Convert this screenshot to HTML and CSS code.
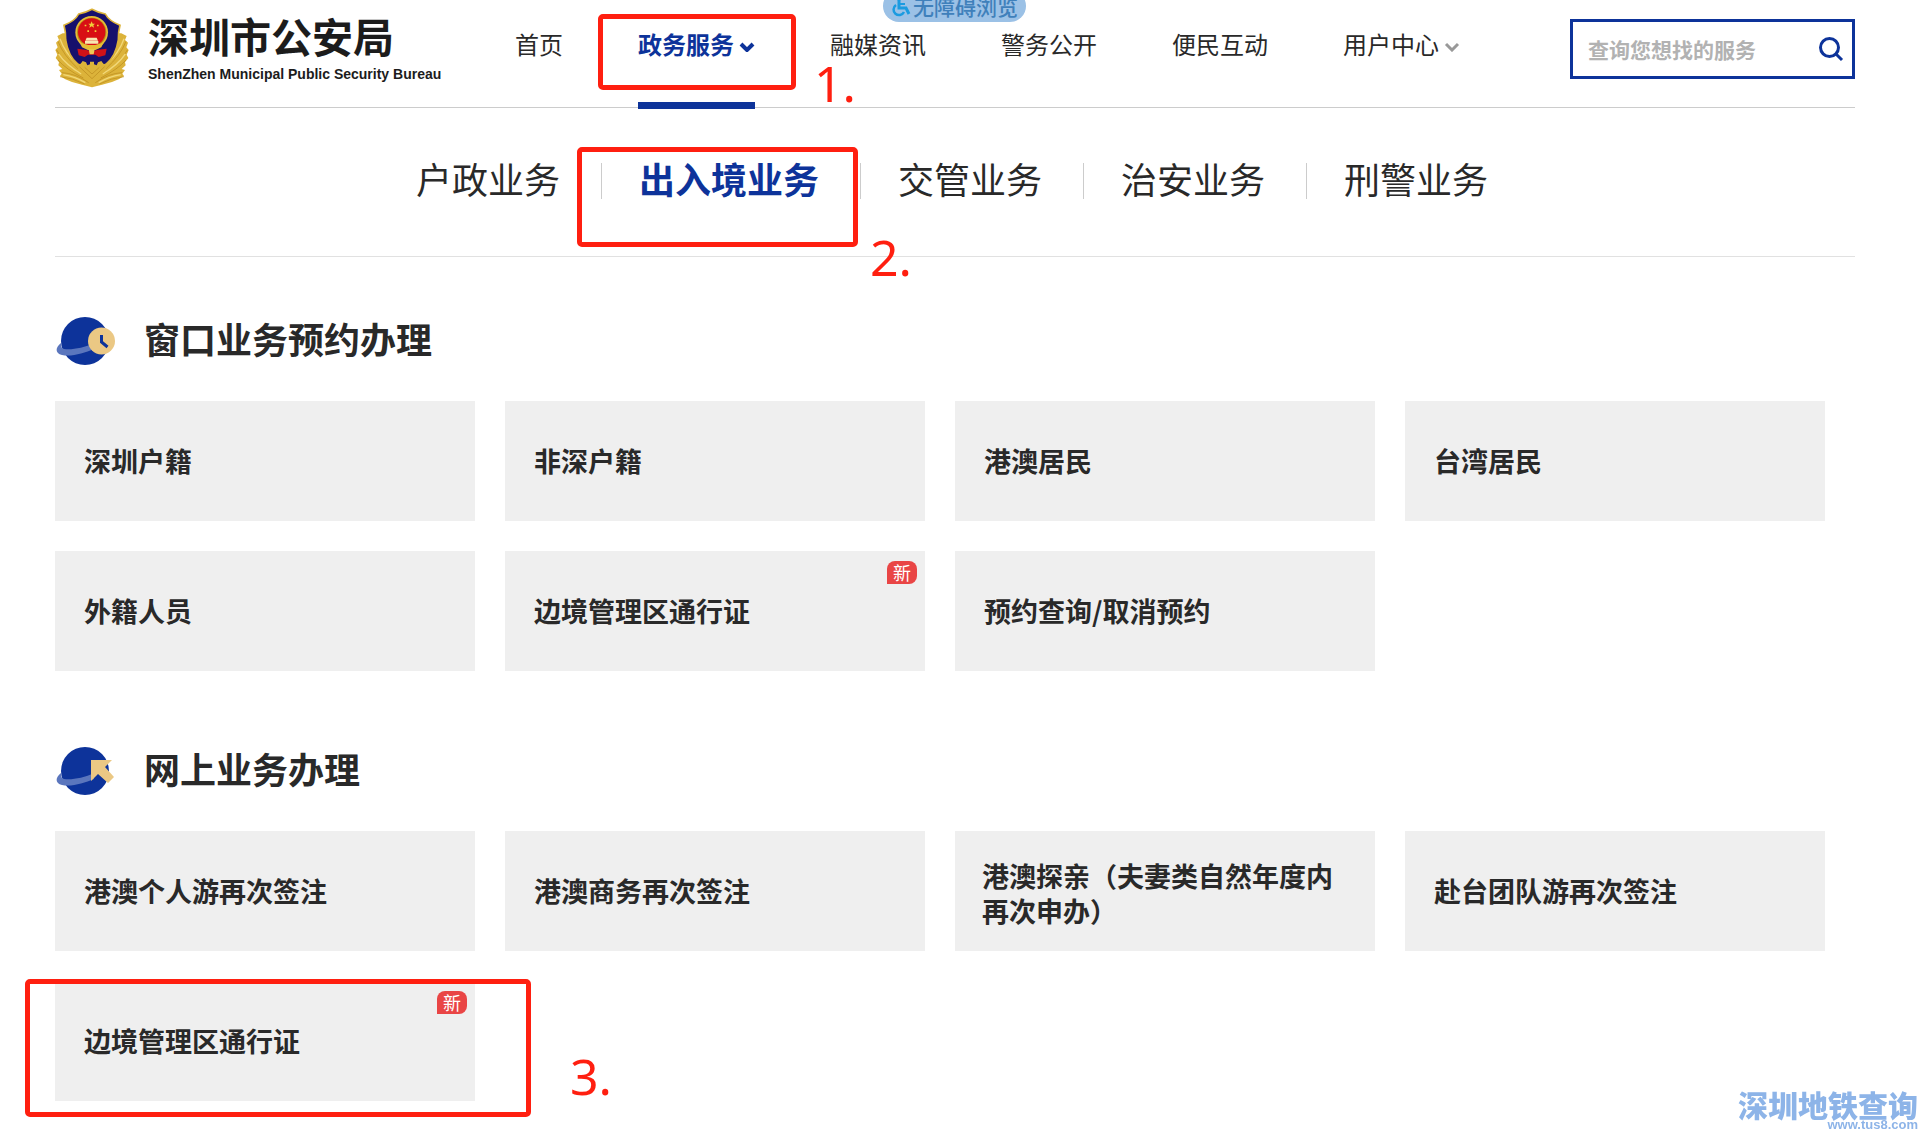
FILE: index.html
```
<!DOCTYPE html>
<html lang="zh-CN">
<head>
  <meta charset="UTF-8">
  <title>深圳市公安局</title>
  <link rel="stylesheet" href="styles.css">
</head>
<body>
  <a href="#" class="barrier-free">
    <svg width="20" height="22" viewBox="0 0 20 22" fill="none" stroke="#1b9be0" stroke-width="3">
      <circle cx="8" cy="3" r="2.5" fill="#1b9be0" stroke="none"/>
      <path d="M8 5v8h7l3 6"/>
      <path d="M8 9h6" stroke-width="2"/>
      <path d="M5 10a5.500 5.500 0 1 0 8 7" stroke-width="2.500"/>
    </svg>
    <span>无障碍浏览</span>
  </a>

  <div class="wrap">
    <!-- 头部 -->
    <header class="header">
      <a href="#" class="logo">
        <svg class="emblem" width="74" height="81" viewBox="15 12 222 243">
          <!-- 松枝 -->
          <path fill="#dcb33a" d="M38 88L22 96l5 12-9 8 5 14-7 8 6 14-5 10 10 13-2 9 12 11-10 3 8 11-5 7 16 10 20 8 30 8 30 8 30-8 30-8 20-8 16-10-5-7 8-11-10-3 12-11-2-9 10-13-5-10 6-14-7-8 5-14-9-8 5-12-16-8z"/>
          <g fill="none" stroke="#b98a1d" stroke-width="2">
            <path d="M24 112q16 42 60 82M20 138q20 36 66 68M24 168q24 28 76 54M30 218q38 4 74 22M36 206q40 2 80 30"/>
            <path d="M228 112q-16 42-60 82M232 138q-20 36-66 68M228 168q-24 28-76 54M222 218q-38 4-74 22M216 206q-40 2-80 30"/>
          </g>
          <g fill="none" stroke="#f2d878" stroke-width="4">
            <path d="M30 104q14 42 54 78M26 150q22 32 68 60M40 212q36 6 66 24"/>
            <path d="M222 104q-14 42-54 78M226 150q-22 32-68 60M212 212q-36 6-66 24"/>
          </g>
          <!-- 盾牌 -->
          <path fill="#16106c" stroke="#dcb33a" stroke-width="5" d="M126 16q18 10 40 14 10 20 44 34-6 22-5 44-8 50-36 72-18 14-43 20-25-6-43-20-28-22-36-72 1-22-5-44 34-14 44-34 22-4 40-14z"/>
          <!-- 国徽 -->
          <circle cx="125" cy="85" r="49" fill="#e6bd35"/>
          <circle cx="125" cy="85" r="44" fill="#b98a1d"/>
          <circle cx="125" cy="84" r="41" fill="#d80f14"/>
          <path fill="#f0ce3a" d="M125 52l3 7h7l-5 5 2 7-7-4-7 4 2-7-5-5h7z"/>
          <path fill="#f0ce3a" d="M104 62h5v5h-5zM141 62h5v5h-5zM112 79h5v5h-5zM134 79h5v5h-5z"/>
          <path fill="#f7e7b0" d="M110 101h30l4 9h-38zM105 111h40v8h-40z"/>
          <path fill="#e6bd35" d="M88 113q16 10 37 10t37-10l-8 17q-14 9-29 9t-29-9z"/>
          <path fill="#cf1218" d="M82 134l24 3 19 5 19-5 26-3-4 20-20 5-10-7h-22l-10 7-18-5z"/>
          <path fill="#ecc956" d="M116 136h18l-3 15h-12z"/>
          <!-- 城墙 -->
          <path fill="#dcb33a" d="M76 182l16-3 6-8 10 4 4 9 8-3v-8h12v8l8 3 4-9 10-4 6 8 16 3-18 26-32 30-32-30z"/>
          <path fill="none" stroke="#b98a1d" stroke-width="2" d="M88 188l38 36 38-36M104 190l22 20 22-20"/>
        </svg>
        <span class="logo-text">
          <strong>深圳市公安局</strong>
          <em>ShenZhen Municipal Public Security Bureau</em>
        </span>
      </a>

      <ul class="nav">
        <li><a href="#">首页</a></li>
        <li class="active">
          <a href="#">政务服务<svg width="16" height="10" viewBox="0 0 16 10"><path d="M2 2l6 6 6-6"/></svg></a>
          <span class="mark mark-nav"></span>
          <b class="step step-nav">1.</b>
        </li>
        <li><a href="#">融媒资讯</a></li>
        <li><a href="#">警务公开</a></li>
        <li><a href="#">便民互动</a></li>
        <li><a href="#">用户中心<svg width="16" height="10" viewBox="0 0 16 10"><path d="M2 2l6 6 6-6"/></svg></a></li>
      </ul>

      <form class="search">
        <input type="text" placeholder="查询您想找的服务" aria-label="查询您想找的服务">
        <button type="button" aria-label="搜索">
          <svg width="26" height="26" viewBox="0 0 26 26" fill="none" stroke="#0d339a" stroke-width="3">
            <circle cx="11.500" cy="11.500" r="9"/>
            <path d="M18 18l6 6"/>
          </svg>
        </button>
      </form>
    </header>

    <!-- 二级导航 -->
    <ul class="subnav">
      <li><a href="#">户政业务</a></li>
      <li class="active">
        <a href="#">出入境业务</a>
        <span class="mark mark-sub"></span>
        <b class="step step-sub">2.</b>
      </li>
      <li><a href="#">交管业务</a></li>
      <li><a href="#">治安业务</a></li>
      <li><a href="#">刑警业务</a></li>
    </ul>

    <!-- 窗口业务预约办理 -->
    <section class="service">
      <h2>
        <svg width="60" height="48" viewBox="0 0 60 48">
          <circle cx="29" cy="24" r="24" fill="#0d339a"/>
          <path fill="#5b76bd" d="M5 26C-1 31-1 36 6 38c10 2 22-2 32-6v-6c-10 5-22 7-30 6-3-1-3-3-3-6z"/>
          <circle cx="45.500" cy="24" r="13.500" fill="#ebc884"/>
          <path d="M45.500 18v7l6 5" fill="none" stroke="#0d339a" stroke-width="3"/>
        </svg>
        窗口业务预约办理
      </h2>
      <div class="list">
        <a href="#">深圳户籍</a>
        <a href="#">非深户籍</a>
        <a href="#">港澳居民</a>
        <a href="#">台湾居民</a>
        <a href="#">外籍人员</a>
        <a href="#">边境管理区通行证<i class="new">新</i></a>
        <a href="#">预约查询/取消预约</a>
      </div>
    </section>

    <!-- 网上业务办理 -->
    <section class="service">
      <h2>
        <svg width="60" height="48" viewBox="0 0 60 48">
          <circle cx="29" cy="24" r="24" fill="#0d339a"/>
          <path fill="#5b76bd" d="M5 26C-1 31-1 36 6 38c10 2 22-2 32-6v-6c-10 5-22 7-30 6-3-1-3-3-3-6z"/>
          <path fill="#ebc884" d="M35 13h21l-7 7 9 10-6 6-10-9-7 7z"/>
        </svg>
        网上业务办理
      </h2>
      <div class="list">
        <a href="#">港澳个人游再次签注</a>
        <a href="#">港澳商务再次签注</a>
        <a href="#" class="multi">港澳探亲（夫妻类自然年度内再次申办）</a>
        <a href="#">赴台团队游再次签注</a>
        <div class="item">
          <a href="#">边境管理区通行证<i class="new">新</i></a>
          <span class="mark mark-item"></span>
          <b class="step step-item">3.</b>
        </div>
      </div>
    </section>
  </div>

  <div class="watermark">
    <strong>深圳地铁查询</strong>
    <span>www.tus8.com</span>
  </div>
</body>
</html>
```
FILE: styles.css
```
* {
  margin: 0;
  padding: 0;
  box-sizing: border-box;
}

body {
  min-height: 100vh;
  font-family: "Noto Sans CJK SC", sans-serif;
  color: #292929;
  background: #fff;
}

ul {
  list-style: none;
}

a {
  color: inherit;
  text-decoration: none;
}

i, em {
  font-style: normal;
}

svg {
  display: block;
  flex-shrink: 0;
}

.wrap {
  padding: 0 66px 30px 55px;
}

/* 无障碍浏览 */
.barrier-free {
  position: absolute;
  top: -10px;
  left: 883px;
  display: flex;
  align-items: center;
  gap: 2px;
  height: 32px;
  padding: 0 8px;
  border-radius: 16px;
  background: #9bc1e6;
  color: #3f80bb;
  font-size: 21px;
  font-weight: 500;
  line-height: 32px;
}

/* 头部 */
.header {
  display: flex;
  height: 108px;
  border-bottom: 1px solid #ccc;
}

.logo {
  display: flex;
  gap: 19px;
  width: 460px;
  padding-top: 8px;
}

.logo-text {
  color: #1c1c1c;
  white-space: nowrap;
}

.logo-text strong {
  display: block;
  font-size: 41px;
  line-height: 54px;
  font-weight: 700;
}

.logo-text em {
  display: block;
  font: bold 14px/24px "Liberation Sans", Arial, sans-serif;
}

.nav {
  display: flex;
  gap: 75px;
  font-size: 24px;
}

.nav li {
  position: relative;
  height: 108px;
  white-space: nowrap;
}

.nav a {
  display: flex;
  align-items: center;
  gap: 5px;
  height: 86px;
}

.nav a svg {
  margin-top: 8px;
  fill: none;
  stroke: #999;
  stroke-width: 3;
}

.nav .active {
  color: #0d339a;
  font-weight: bold;
}

.nav .active svg {
  stroke: #0d339a;
  stroke-width: 4;
}

.nav .active::after {
  content: "";
  position: absolute;
  left: 0;
  right: 0;
  bottom: -1px;
  height: 7px;
  background: #0d339a;
}

.search {
  display: flex;
  align-items: center;
  width: 285px;
  height: 60px;
  margin: 19px 0 0 auto;
  padding: 0 8px 0 15px;
  border: 3px solid #0d339a;
}

.search input {
  flex: 1;
  min-width: 0;
  border: 0;
  outline: 0;
  background: none;
  font: bold 21px/30px "Noto Sans CJK SC", sans-serif;
}

.search input::placeholder {
  color: #b2b2b2;
}

.search button {
  border: 0;
  background: none;
  cursor: pointer;
}

/* 二级导航 */
.subnav {
  display: flex;
  justify-content: center;
  padding: 55px 2px 57px 0;
  border-bottom: 1px solid #e1e1e1;
  font-size: 36px;
  line-height: 30px;
}

.subnav li {
  position: relative;
  height: 36px;
  padding: 0 41px 0 37px;
  white-space: nowrap;
}

.subnav li + li {
  border-left: 1px solid #ccc;
}

.subnav a {
  display: block;
}

.subnav .active a {
  color: #0d339a;
  font-weight: bold;
}

/* 业务列表 */
.service h2 {
  display: flex;
  align-items: center;
  gap: 28px;
  height: 160px;
  padding: 34px 0 0 1px;
  font-size: 36px;
  line-height: 48px;
}

.service h2 svg {
  margin-top: 6px;
}

.service:nth-of-type(1) h2 {
  height: 144px;
  padding-top: 18px;
}

.list {
  display: grid;
  grid-template-columns: repeat(4, 1fr);
  gap: 30px;
  margin-right: 30px;
}

.list a {
  position: relative;
  display: flex;
  align-items: center;
  height: 120px;
  padding: 0 29px 2px;
  background: #efefef;
  font-size: 27px;
  line-height: 35px;
  font-weight: bold;
}

.list .multi {
  padding: 4px 29px 0 27px;
}

.item {
  position: relative;
}

.new {
  position: absolute;
  top: 10px;
  right: 8px;
  width: 30px;
  height: 23px;
  border-radius: 8px 8px 8px 0;
  background: #e94545;
  color: #fff;
  font-size: 18px;
  line-height: 22px;
  font-weight: normal;
  text-align: center;
}

/* 操作步骤标注 */
.mark {
  position: absolute;
  z-index: 2;
  border: 5px solid #ff1f10;
  border-radius: 5px;
  pointer-events: none;
}

.mark-nav {
  top: 14px;
  left: -40px;
  right: -41px;
  height: 76px;
}

.mark-sub {
  top: -16px;
  left: -25px;
  right: 2px;
  height: 100px;
}

.mark-item {
  top: -2px;
  left: -30px;
  right: -56px;
  bottom: -16px;
}

.step {
  position: absolute;
  z-index: 2;
  color: #ff1f10;
  font: 400 50px/60px "Noto Sans", sans-serif;
}

.step-nav {
  top: 53px;
  left: 176px;
}

.step-sub {
  top: 64px;
  left: 268px;
}

.step-item {
  top: 65px;
  left: 515px;
}

/* 水印 */
.watermark {
  position: fixed;
  right: 3px;
  bottom: 0;
  color: #8db4e8;
  text-align: right;
}

.watermark strong {
  display: block;
  font-size: 30px;
  line-height: 28px;
  font-weight: 900;
}

.watermark span {
  display: block;
  font: bold 13px/14px "Liberation Sans", Arial, sans-serif;
}
```
